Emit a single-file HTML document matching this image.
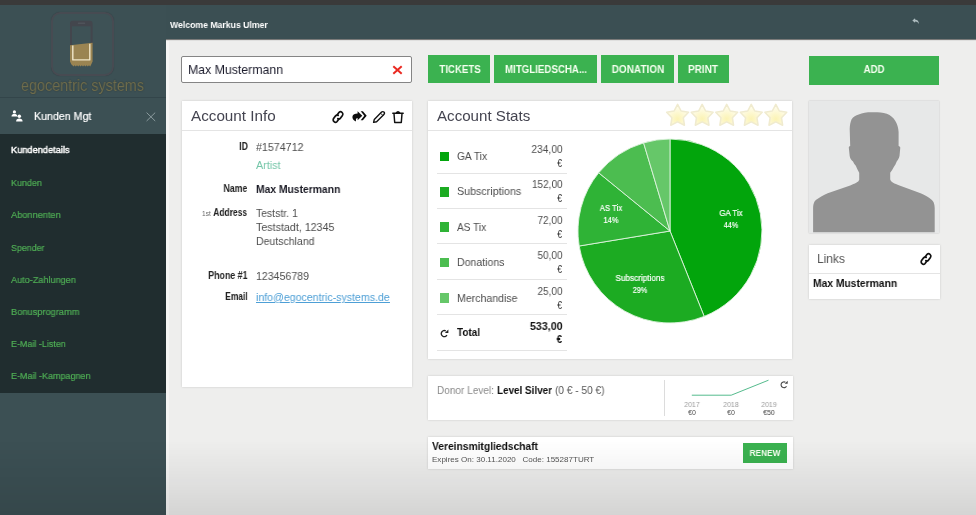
<!DOCTYPE html>
<html>
<head>
<meta charset="utf-8">
<title>Kundendetails</title>
<style>
*{box-sizing:border-box;margin:0;padding:0}
html,body{width:976px;height:515px;overflow:hidden;background:#ededed;font-family:"Liberation Sans",sans-serif;}
.abs{position:absolute}
.t{position:absolute;white-space:nowrap;line-height:1;will-change:transform}
.panel{position:absolute;background:#fff;box-shadow:0 0 2px rgba(0,0,0,.16)}
.btn{position:absolute;background:#3bb250}
.sq{position:absolute;width:9.5px;height:9.5px;left:439.5px}
.sep{position:absolute;left:436.5px;width:130px;height:1px;background:#e4e4e4}
</style>
</head>
<body>
<div class="abs" style="left:166px;top:39px;width:810px;height:476px;background:#eeeeed"></div>
<div class="abs" style="left:166px;top:39px;width:2.6px;height:476px;background:#f5f5f4"></div>
<div class="abs" style="left:166px;top:39px;width:810px;height:2.2px;background:#f4f4f3"></div>
<div class="abs" style="left:0;top:5px;width:976px;height:33.6px;background:#3b4f53;box-shadow:0 1px 1px rgba(0,0,0,.5)"></div>
<div class="abs" style="left:0;top:5px;width:166px;height:510px;background:#3c5054"></div>
<div class="abs" style="left:0;top:0;width:976px;height:5px;background:#3a3a3a"></div>
<svg class="abs" style="left:911.6px;top:18.3px" width="7.6" height="6.6" viewBox="0 0 9 8"><path d="M3.6 0.3 L0.3 3 L3.6 5.7 L3.6 4.1 C5.8 4.1 7.2 5 8.2 7.4 C8.2 4.4 6.8 2 3.6 1.9 Z" fill="#aebdc0"/></svg>
<div class="abs" style="left:51.2px;top:12px;width:62.6px;height:64px;border:2.2px solid #474b52;border-radius:9px;background:#3e5256;box-shadow:0 0 1px rgba(0,0,0,.25)"></div>
<svg class="abs" style="left:66px;top:17px" width="30" height="54" viewBox="0 0 30 54">
  <path d="M4 30 L4 6.4 Q4 3.7 6.7 3.7 L23.9 3.7 Q26.6 3.7 26.6 6.4 L26.6 30 L24.6 30 L24.6 9.2 L6 9.2 L6 30 Z" fill="#43464d"/>
  <rect x="11.8" y="5.7" width="7.4" height=".9" rx=".45" fill="#5d6168"/>
  <path d="M4 28.3 L26.6 25.8 L26.6 44.6 L25.2 47.4 L24.2 49.6 L23 48.2 L21.8 49.6 L20.6 48.2 L19.4 49.6 L18.2 48.2 L17 49.6 L15.8 48.2 L14.6 49.6 L13.4 48.2 L12.2 49.6 L11 48.2 L9.8 49.6 L8.6 48.2 L7.4 49.6 L6.4 48.2 L5.4 47.4 L4 44.6 Z" fill="#9a8452"/>
  <path d="M6.8 28.6 L6.8 42.9 L23.8 42.9 L23.8 26.8" fill="none" stroke="#f0e6c8" stroke-width="1.4" stroke-linejoin="round"/>
</svg>
<div class="abs" style="left:0;top:97px;width:166px;height:1px;background:#33454a"></div>
<svg class="abs" style="left:11.2px;top:110.3px" width="12" height="12" viewBox="0 0 12 12">
  <circle cx="3.4" cy="1.9" r="1.6" fill="#fff"/><path d="M0.5 6.4 C0.5 4.4 1.8 3.9 3.4 3.9 C5 3.9 6.3 4.4 6.3 6.4 Z" fill="#fff"/>
  <circle cx="8.3" cy="6.3" r="1.75" fill="#fff"/><path d="M5.1 11.4 C5.1 9.1 6.5 8.4 8.3 8.4 C10.1 8.4 11.6 9.1 11.6 11.4 Z" fill="#fff"/>
</svg>
<svg class="abs" style="left:145.7px;top:111.8px" width="10" height="10" viewBox="0 0 10 10"><path d="M0.6 0.6 L9.2 9 M9.2 0.6 L0.6 9" stroke="#8c9c9f" stroke-width="1"/></svg>
<div class="abs" style="left:0;top:134px;width:166px;height:259px;background:#202d2f"></div>
<div class="abs" style="left:0;top:393px;width:166px;height:122px;background:#3c5054"></div>
<div class="abs" style="left:181px;top:56px;width:230.5px;height:27px;background:#fff;border:1px solid #858585;border-radius:2px"></div>
<svg class="abs" style="left:391.5px;top:65px" width="11" height="10" viewBox="0 0 11 10"><path d="M1.3 1.2 L9.7 8.8 M9.7 1.2 L1.3 8.8" stroke="#ea2a22" stroke-width="2"/></svg>
<div class="btn" style="left:428.25px;top:55px;width:62.0px;height:27.5px"></div>
<div class="btn" style="left:494px;top:55px;width:103px;height:27.5px"></div>
<div class="btn" style="left:601.25px;top:55px;width:72.5px;height:27.5px"></div>
<div class="btn" style="left:678px;top:55px;width:50.75px;height:27.5px"></div>
<div class="btn" style="left:808.75px;top:55.5px;width:130.5px;height:29.5px"></div>
<div class="panel" style="left:182px;top:100.5px;width:229.5px;height:286.5px"></div>
<div class="abs" style="left:182px;top:130px;width:229.5px;height:1px;background:#e4e4e4"></div>
<svg class="abs" style="left:330.5px;top:109.7px" width="14" height="14" viewBox="0 0 14 14"><g fill="none" stroke="#111" stroke-width="1.6" stroke-linecap="round" transform="translate(7 7) scale(1.0 1.12) rotate(-4) translate(-7 -7)"><path d="M6.3 5 L8.3 3 A2.2 2.2 0 0 1 11.4 6.1 L9.4 8.1 A2.2 2.2 0 0 1 6.7 8.4"/><path d="M7.7 9 L5.7 11 A2.2 2.2 0 0 1 2.6 7.9 L4.6 5.9 A2.2 2.2 0 0 1 7.3 5.6"/></g></svg>
<svg class="abs" style="left:351.6px;top:111.3px" width="15" height="11" viewBox="0 0 15 11"><path d="M5.6 0.2 L10.3 4.7 L5.6 9.2 L5.6 6.9 C4.4 6.9 3.6 7.6 4 10.6 C1.2 9.4 0 7.2 0.5 5.2 C1 3.4 2.8 2.6 5.6 2.5 Z" fill="#0c0c0c"/><path d="M8.7 0.2 L10.9 0.2 L14.7 4.7 L10.9 9.2 L8.7 9.2 L12.3 4.7 Z" fill="#0c0c0c"/></svg>
<svg class="abs" style="left:372px;top:110px" width="14" height="14" viewBox="0 0 14 14"><path d="M1.6 12.4 L2.3 9.4 L9.6 2.1 A1.45 1.45 0 0 1 11.9 4.4 L4.6 11.7 Z" fill="none" stroke="#111" stroke-width="1.4" stroke-linejoin="round"/><path d="M8.6 3.2 L10.8 5.4" stroke="#111" stroke-width="1"/></svg>
<svg class="abs" style="left:392.3px;top:109.6px" width="12" height="14" viewBox="0 0 12 14"><path d="M0.8 3.3 L11.2 3.3 M4.2 3 Q6 0.4 7.8 3 M2 3.6 L2.7 12.5 L9.3 12.5 L10 3.6" fill="none" stroke="#111" stroke-width="1.45" stroke-linejoin="round" stroke-linecap="round"/></svg>
<div class="panel" style="left:428px;top:100.5px;width:363.5px;height:258.5px"></div>
<div class="abs" style="left:428px;top:130px;width:363.5px;height:1px;background:#e4e4e4"></div>
<svg class="abs" style="left:664.7px;top:102px" width="126" height="26" viewBox="0 0 126 26">
 <defs><radialGradient id="sg" cx="0.5" cy="0.7" r="0.6"><stop offset="0" stop-color="#fbf3b4"/><stop offset="1" stop-color="#fffdee"/></radialGradient></defs>
 <g fill="url(#sg)" stroke="#f0ebcf" stroke-width="1.6" stroke-linejoin="round">
  <path id="st" d="M12.6 2.4 L16.1 9.0 L23.5 10.3 L18.3 15.8 L19.4 23.2 L12.6 19.9 L5.8 23.2 L6.9 15.8 L1.7 10.3 L9.1 9.0 Z"/>
  <use href="#st" x="24.55"/><use href="#st" x="49.1"/><use href="#st" x="73.65"/><use href="#st" x="98.2"/>
 </g>
</svg>
<div class="sq" style="top:151.89999999999998px;background:#02a50c"></div>
<div class="sq" style="top:187.2px;background:#1cab22"></div>
<div class="sq" style="top:222.45px;background:#2fb336"></div>
<div class="sq" style="top:257.95px;background:#4cbd50"></div>
<div class="sq" style="top:293.45px;background:#66c769"></div>
<div class="sep" style="top:172.5px"></div>
<div class="sep" style="top:207.75px"></div>
<div class="sep" style="top:243.25px"></div>
<div class="sep" style="top:278.75px"></div>
<div class="sep" style="top:314.0px"></div>
<div class="sep" style="top:349.5px"></div>
<svg class="abs" style="left:440px;top:329px" width="9" height="9" viewBox="0 0 9 9"><path d="M5.82 1.96 A3.05 3.05 0 1 0 6.94 6.12" fill="none" stroke="#222" stroke-width="1.35"/><path d="M8.4 0.4 L8.4 3.9 L4.9 3.9 Z" fill="#222"/></svg>
<svg class="abs" style="left:573px;top:134.25px" width="194" height="194" viewBox="-97 -97 194 194">
 <g stroke="#dff3df" stroke-width="0.9">
  <path d="M0 0 L0 -92 A92 92 0 0 1 34.2 85.4 Z" fill="#02a50c"/>
  <path d="M0 0 L34.2 85.4 A92 92 0 0 1 -90.8 15 Z" fill="#1cab22"/>
  <path d="M0 0 L-90.8 15 A92 92 0 0 1 -71.3 -58.2 Z" fill="#2fb336"/>
  <path d="M0 0 L-71.3 -58.2 A92 92 0 0 1 -26.4 -88.1 Z" fill="#4cbd50"/>
  <path d="M0 0 L-26.4 -88.1 A92 92 0 0 1 0 -92 Z" fill="#66c769"/>
 </g>
</svg>
<div class="panel" style="left:428px;top:375.5px;width:364.5px;height:44.5px"></div>
<div class="abs" style="left:664px;top:380px;width:1px;height:36px;background:#dcdcdc"></div>
<svg class="abs" style="left:680px;top:376px" width="112" height="44" viewBox="0 0 112 44"><path d="M11.8 19.2 L51.2 19.2 L88.5 4.2" fill="none" stroke="#55bb8d" stroke-width="1"/><path d="M105.45 6.29 A2.9 2.9 0 1 0 106.51 10.25" fill="none" stroke="#444" stroke-width="1.1"/><path d="M107.7 4.7 L107.7 7.7 L104.7 7.7 Z" fill="#444"/></svg>
<div class="panel" style="left:428px;top:436.7px;width:364.5px;height:32.2px"></div>
<div class="btn" style="left:742.8px;top:443.2px;width:44.2px;height:19.4px"></div>
<div class="abs" style="left:808.8px;top:100.5px;width:130.6px;height:132.2px;background:#e7e8e8;box-shadow:0 0 1.5px rgba(0,0,0,.22)"></div>
<svg class="abs" style="left:808.4px;top:100.6px" width="132" height="132" viewBox="0 0 132 132">
 <path d="M5.1 131.2 L5.1 107 C5.3 102 6.6 99.6 9 98.2 C12 96.2 15 94.2 19.7 92.3 L42.2 84.4 C47 82.6 50.6 81.2 51.2 78.8 L51.2 71.8 C49.8 69.4 48.8 67 47.8 64.7 C46.6 63.4 45.6 62 45 60.5 C43 58.6 42 57 41.7 54.9 L40.8 46.4 C40.9 45.6 41.4 45.1 42.2 45 L41.7 28.1 C41.8 24.4 42.4 21.2 43.6 18.3 C45.4 15.6 47.8 14.4 50.7 13.5 C54.6 11.8 59.4 11.2 64.7 11.3 C69.6 11.2 74.4 11.6 78.8 12.7 C82.6 14.2 85.4 16.6 87.2 19.7 C89.2 23 90.4 26.8 90.6 31 L90.6 45 C91.4 45.1 92 45.6 92.3 46.4 L91.5 54.9 C91 57 90 58.8 88.7 60.5 C88 62.6 87 64.4 85.8 66.1 C84.8 68.2 83.6 70 82.2 71.8 L82.2 78.2 C82.8 81 86.4 82.6 91.5 84.4 L112.6 92.3 C117.4 94.2 120.4 96.2 123.3 98.5 C125.6 100 126.6 103 126.7 107 L126.7 131.2 Z" fill="#939393"/>
</svg>
<div class="panel" style="left:808.8px;top:245px;width:131.2px;height:53.6px"></div>
<div class="abs" style="left:808.8px;top:272.8px;width:131.2px;height:1px;background:#e4e4e4"></div>
<svg class="abs" style="left:918.6px;top:251.9px" width="14" height="14" viewBox="0 0 14 14"><g fill="none" stroke="#111" stroke-width="1.6" stroke-linecap="round" transform="translate(7 7) scale(1.0 1.12) rotate(-4) translate(-7 -7)"><path d="M6.3 5 L8.3 3 A2.2 2.2 0 0 1 11.4 6.1 L9.4 8.1 A2.2 2.2 0 0 1 6.7 8.4"/><path d="M7.7 9 L5.7 11 A2.2 2.2 0 0 1 2.6 7.9 L4.6 5.9 A2.2 2.2 0 0 1 7.3 5.6"/></g></svg>
<div id="t0" class="t" style="left:169.8px;transform-origin:0 0;top:19.96px;font-size:9.5px;font-weight:bold;color:#fff;transform:scaleX(0.9139);">Welcome Markus Ulmer</div>
<div id="t1" class="t" style="left:20.5px;transform-origin:0 0;top:77.56px;font-size:16px;font-weight:normal;color:#6f6d4d;transform:scaleX(0.8982);text-shadow:0 0 1.5px rgba(30,30,20,.55);">egocentric systems</div>
<div id="t2" class="t" style="left:34.4px;transform-origin:0 0;top:111.07px;font-size:11.5px;font-weight:normal;color:#fff;transform:scaleX(0.9256);-webkit-text-stroke:.2px #fff;">Kunden Mgt</div>
<div id="t3" class="t" style="left:11.4px;transform-origin:0 0;top:145.37px;font-size:9.6px;font-weight:normal;color:#fff;transform:scaleX(0.9620);-webkit-text-stroke:.4px #fff;">Kundendetails</div>
<div id="t4" class="t" style="left:11.4px;transform-origin:0 0;top:177.87px;font-size:9.6px;font-weight:normal;color:#4fae55;transform:scaleX(0.9311);-webkit-text-stroke:.2px #4fae55;">Kunden</div>
<div id="t5" class="t" style="left:11.4px;transform-origin:0 0;top:210.27px;font-size:9.6px;font-weight:normal;color:#4fae55;transform:scaleX(0.9604);-webkit-text-stroke:.2px #4fae55;">Abonnenten</div>
<div id="t6" class="t" style="left:11.4px;transform-origin:0 0;top:242.57px;font-size:9.6px;font-weight:normal;color:#4fae55;transform:scaleX(0.9233);-webkit-text-stroke:.2px #4fae55;">Spender</div>
<div id="t7" class="t" style="left:11.4px;transform-origin:0 0;top:274.57px;font-size:9.6px;font-weight:normal;color:#4fae55;transform:scaleX(0.9490);-webkit-text-stroke:.2px #4fae55;">Auto-Zahlungen</div>
<div id="t8" class="t" style="left:11.4px;transform-origin:0 0;top:307.27px;font-size:9.6px;font-weight:normal;color:#4fae55;transform:scaleX(0.9644);-webkit-text-stroke:.2px #4fae55;">Bonusprogramm</div>
<div id="t9" class="t" style="left:11.4px;transform-origin:0 0;top:338.67px;font-size:9.6px;font-weight:normal;color:#4fae55;transform:scaleX(0.9343);-webkit-text-stroke:.2px #4fae55;">E-Mail -Listen</div>
<div id="t10" class="t" style="left:11.4px;transform-origin:0 0;top:371.47px;font-size:9.6px;font-weight:normal;color:#4fae55;transform:scaleX(0.9375);-webkit-text-stroke:.2px #4fae55;">E-Mail -Kampagnen</div>
<div id="t11" class="t" style="left:188px;transform-origin:0 0;top:62.75px;font-size:13px;font-weight:normal;color:#1c1c2c;transform:scaleX(0.9460);">Max Mustermann</div>
<div id="t12" class="t" style="left:459.6px;transform-origin:50% 0;transform:translateX(-50%) scaleX(0.9183);top:63.61px;font-size:10.5px;font-weight:bold;color:#f6fff0;">TICKETS</div>
<div id="t13" class="t" style="left:545.5px;transform-origin:50% 0;transform:translateX(-50%) scaleX(0.9248);top:63.61px;font-size:10.5px;font-weight:bold;color:#f6fff0;">MITGLIEDSCHA...</div>
<div id="t14" class="t" style="left:638px;transform-origin:50% 0;transform:translateX(-50%) scaleX(0.9508);top:63.61px;font-size:10.5px;font-weight:bold;color:#f6fff0;">DONATION</div>
<div id="t15" class="t" style="left:703.25px;transform-origin:50% 0;transform:translateX(-50%) scaleX(0.9524);top:63.61px;font-size:10.5px;font-weight:bold;color:#f6fff0;">PRINT</div>
<div id="t16" class="t" style="left:874.1px;transform-origin:50% 0;transform:translateX(-50%) scaleX(0.8702);top:64.44px;font-size:11px;font-weight:bold;color:#f6fff0;">ADD</div>
<div id="t17" class="t" style="left:190.5px;transform-origin:0 0;top:108.30px;font-size:15px;font-weight:normal;color:#444450;transform:scaleX(1.0157);">Account Info</div>
<div id="t18" class="t" style="left:436.5px;transform-origin:0 0;top:108.30px;font-size:15px;font-weight:normal;color:#444450;transform:scaleX(1.0074);">Account Stats</div>
<div id="t19" class="t" style="right:728.5px;transform-origin:100% 0;top:141.53px;font-size:10px;font-weight:bold;color:#222;transform:scaleX(0.8750);">ID</div>
<div id="t20" class="t" style="left:255.5px;transform-origin:0 0;top:141.69px;font-size:11px;font-weight:normal;color:#4e4e4e;transform:scaleX(0.9703);">#1574712</div>
<div id="t21" class="t" style="left:255.5px;transform-origin:0 0;top:160.29px;font-size:11px;font-weight:normal;color:#74c6a8;transform:scaleX(0.9776);">Artist</div>
<div id="t22" class="t" style="right:728.75px;transform-origin:100% 0;top:183.53px;font-size:10px;font-weight:bold;color:#222;transform:scaleX(0.8716);">Name</div>
<div id="t23" class="t" style="left:255.5px;transform-origin:0 0;top:183.69px;font-size:11px;font-weight:bold;color:#1a1a24;transform:scaleX(0.9376);">Max Mustermann</div>
<div id="t24" class="t" style="left:201.75px;transform-origin:0 0;top:210.50px;font-size:6.5px;font-weight:normal;color:#666;transform:scaleX(1.0090);">1st</div>
<div id="t25" class="t" style="right:728.75px;transform-origin:100% 0;top:207.53px;font-size:10px;font-weight:bold;color:#222;transform:scaleX(0.8434);">Address</div>
<div id="t26" class="t" style="left:255.5px;transform-origin:0 0;top:207.69px;font-size:11px;font-weight:normal;color:#4e4e4e;transform:scaleX(0.9482);">Teststr. 1</div>
<div id="t27" class="t" style="left:255.5px;transform-origin:0 0;top:221.69px;font-size:11px;font-weight:normal;color:#4e4e4e;transform:scaleX(0.9723);">Teststadt, 12345</div>
<div id="t28" class="t" style="left:255.5px;transform-origin:0 0;top:235.59px;font-size:11px;font-weight:normal;color:#4e4e4e;transform:scaleX(0.9566);">Deutschland</div>
<div id="t29" class="t" style="right:728.75px;transform-origin:100% 0;top:270.79px;font-size:10px;font-weight:bold;color:#222;transform:scaleX(0.8826);">Phone #1</div>
<div id="t30" class="t" style="left:255.5px;transform-origin:0 0;top:270.69px;font-size:11px;font-weight:normal;color:#4e4e4e;transform:scaleX(0.9625);">123456789</div>
<div id="t31" class="t" style="right:728.75px;transform-origin:100% 0;top:292.04px;font-size:10px;font-weight:bold;color:#222;transform:scaleX(0.8431);">Email</div>
<div id="t32" class="t" style="left:255.5px;transform-origin:0 0;top:291.94px;font-size:11px;font-weight:normal;color:#4d9fd6;transform:scaleX(0.9626);text-decoration:underline;">info@egocentric-systems.de</div>
<div id="t33" class="t" style="left:456.5px;transform-origin:0 0;top:150.99px;font-size:11px;font-weight:normal;color:#4e4e4e;transform:scaleX(0.9257);">GA Tix</div>
<div id="t34" class="t" style="right:413.75px;transform-origin:100% 0;top:143.99px;font-size:11px;font-weight:normal;color:#4e4e4e;transform:scaleX(0.9285);">234,00</div>
<div id="t35" class="t" style="right:413.75px;transform-origin:100% 0;top:158.19px;font-size:11px;font-weight:normal;color:#333;transform:scaleX(0.8163);">€</div>
<div id="t36" class="t" style="left:456.5px;transform-origin:0 0;top:186.29px;font-size:11px;font-weight:normal;color:#4e4e4e;transform:scaleX(0.9728);">Subscriptions</div>
<div id="t37" class="t" style="right:413.75px;transform-origin:100% 0;top:179.29px;font-size:11px;font-weight:normal;color:#4e4e4e;transform:scaleX(0.9136);">152,00</div>
<div id="t38" class="t" style="right:413.75px;transform-origin:100% 0;top:193.49px;font-size:11px;font-weight:normal;color:#333;transform:scaleX(0.8163);">€</div>
<div id="t39" class="t" style="left:456.5px;transform-origin:0 0;top:221.54px;font-size:11px;font-weight:normal;color:#4e4e4e;transform:scaleX(0.9199);">AS Tix</div>
<div id="t40" class="t" style="right:413.75px;transform-origin:100% 0;top:214.54px;font-size:11px;font-weight:normal;color:#4e4e4e;transform:scaleX(0.9081);">72,00</div>
<div id="t41" class="t" style="right:413.75px;transform-origin:100% 0;top:228.74px;font-size:11px;font-weight:normal;color:#333;transform:scaleX(0.8163);">€</div>
<div id="t42" class="t" style="left:456.5px;transform-origin:0 0;top:257.04px;font-size:11px;font-weight:normal;color:#4e4e4e;transform:scaleX(0.9587);">Donations</div>
<div id="t43" class="t" style="right:413.75px;transform-origin:100% 0;top:250.04px;font-size:11px;font-weight:normal;color:#4e4e4e;transform:scaleX(0.9081);">50,00</div>
<div id="t44" class="t" style="right:413.75px;transform-origin:100% 0;top:264.24px;font-size:11px;font-weight:normal;color:#333;transform:scaleX(0.8163);">€</div>
<div id="t45" class="t" style="left:456.5px;transform-origin:0 0;top:292.54px;font-size:11px;font-weight:normal;color:#4e4e4e;transform:scaleX(0.9606);">Merchandise</div>
<div id="t46" class="t" style="right:413.75px;transform-origin:100% 0;top:285.54px;font-size:11px;font-weight:normal;color:#4e4e4e;transform:scaleX(0.9081);">25,00</div>
<div id="t47" class="t" style="right:413.75px;transform-origin:100% 0;top:299.74px;font-size:11px;font-weight:normal;color:#333;transform:scaleX(0.8163);">€</div>
<div id="t48" class="t" style="left:457.25px;transform-origin:0 0;top:326.52px;font-size:11.5px;font-weight:bold;color:#111;transform:scaleX(0.8638);">Total</div>
<div id="t49" class="t" style="right:413.75px;transform-origin:100% 0;top:320.69px;font-size:11px;font-weight:bold;color:#111;transform:scaleX(0.9731);">533,00</div>
<div id="t50" class="t" style="right:413.75px;transform-origin:100% 0;top:333.94px;font-size:11px;font-weight:bold;color:#111;transform:scaleX(0.8980);">€</div>
<div id="t51" class="t" style="left:731px;transform-origin:50% 0;transform:translateX(-50%) scaleX(0.8768);top:208.63px;font-size:9px;font-weight:normal;color:#fff;-webkit-text-stroke:.2px #fff;">GA Tix</div>
<div id="t52" class="t" style="left:731px;transform-origin:50% 0;transform:translateX(-50%) scaleX(0.8049);top:221.28px;font-size:9px;font-weight:normal;color:#fff;-webkit-text-stroke:.2px #fff;">44%</div>
<div id="t53" class="t" style="left:640px;transform-origin:50% 0;transform:translateX(-50%) scaleX(0.9069);top:273.63px;font-size:9px;font-weight:normal;color:#fff;-webkit-text-stroke:.2px #fff;">Subscriptions</div>
<div id="t54" class="t" style="left:640px;transform-origin:50% 0;transform:translateX(-50%) scaleX(0.8049);top:286.38px;font-size:9px;font-weight:normal;color:#fff;-webkit-text-stroke:.2px #fff;">29%</div>
<div id="t55" class="t" style="left:611px;transform-origin:50% 0;transform:translateX(-50%) scaleX(0.8649);top:203.88px;font-size:9px;font-weight:normal;color:#fff;-webkit-text-stroke:.2px #fff;">AS Tix</div>
<div id="t56" class="t" style="left:611px;transform-origin:50% 0;transform:translateX(-50%) scaleX(0.8326);top:216.38px;font-size:9px;font-weight:normal;color:#fff;-webkit-text-stroke:.2px #fff;">14%</div>
<div id="t57" class="t" style="left:436.5px;transform-origin:0 0;top:384.57px;font-size:11.5px;font-weight:normal;color:#8a8a8a;transform:scaleX(0.8740);">Donor Level:</div>
<div id="t58" class="t" style="left:496.5px;transform-origin:0 0;top:384.57px;font-size:11.5px;font-weight:bold;color:#111;transform:scaleX(0.8602);">Level Silver</div>
<div id="t59" class="t" style="left:554.5px;transform-origin:0 0;top:384.57px;font-size:11.5px;font-weight:normal;color:#555;transform:scaleX(0.8800);">(0 € - 50 €)</div>
<div id="t60" class="t" style="left:692px;transform-origin:50% 0;transform:translateX(-50%) scaleX(0.9950);top:401.47px;font-size:7px;font-weight:normal;color:#9a9a9a;">2017</div>
<div id="t61" class="t" style="left:730.5px;transform-origin:50% 0;transform:translateX(-50%) scaleX(0.9950);top:401.47px;font-size:7px;font-weight:normal;color:#9a9a9a;">2018</div>
<div id="t62" class="t" style="left:768.9px;transform-origin:50% 0;transform:translateX(-50%) scaleX(0.9950);top:401.47px;font-size:7px;font-weight:normal;color:#9a9a9a;">2019</div>
<div id="t63" class="t" style="left:692px;transform-origin:50% 0;transform:translateX(-50%) scaleX(0.9619);top:408.67px;font-size:7px;font-weight:normal;color:#444;">€0</div>
<div id="t64" class="t" style="left:730.5px;transform-origin:50% 0;transform:translateX(-50%) scaleX(0.9619);top:408.67px;font-size:7px;font-weight:normal;color:#444;">€0</div>
<div id="t65" class="t" style="left:768.9px;transform-origin:50% 0;transform:translateX(-50%) scaleX(0.9840);top:408.67px;font-size:7px;font-weight:normal;color:#444;">€50</div>
<div id="t66" class="t" style="left:432.25px;transform-origin:0 0;top:440.97px;font-size:11.5px;font-weight:bold;color:#111;transform:scaleX(0.8917);">Vereinsmitgliedschaft</div>
<div id="t67" class="t" style="left:432.25px;transform-origin:0 0;top:455.93px;font-size:8px;font-weight:normal;color:#555;transform:scaleX(1.0042);">Expires On: 30.11.2020 &nbsp; Code: 155287TURT</div>
<div id="t68" class="t" style="left:764.9px;transform-origin:50% 0;transform:translateX(-50%) scaleX(0.8707);top:447.86px;font-size:9.5px;font-weight:bold;color:#f6fff0;">RENEW</div>
<div id="t69" class="t" style="left:816.9px;transform-origin:0 0;top:252.30px;font-size:13px;font-weight:normal;color:#555;transform:scaleX(0.9223);">Links</div>
<div id="t70" class="t" style="left:813.1px;transform-origin:0 0;top:278.49px;font-size:11px;font-weight:bold;color:#111;transform:scaleX(0.9359);">Max Mustermann</div>
<div class="abs" style="left:0;top:440px;width:976px;height:75px;background:linear-gradient(to bottom,rgba(0,0,0,0),rgba(0,0,0,.04) 40%,rgba(0,0,0,.105));pointer-events:none"></div>
</body>
</html>
